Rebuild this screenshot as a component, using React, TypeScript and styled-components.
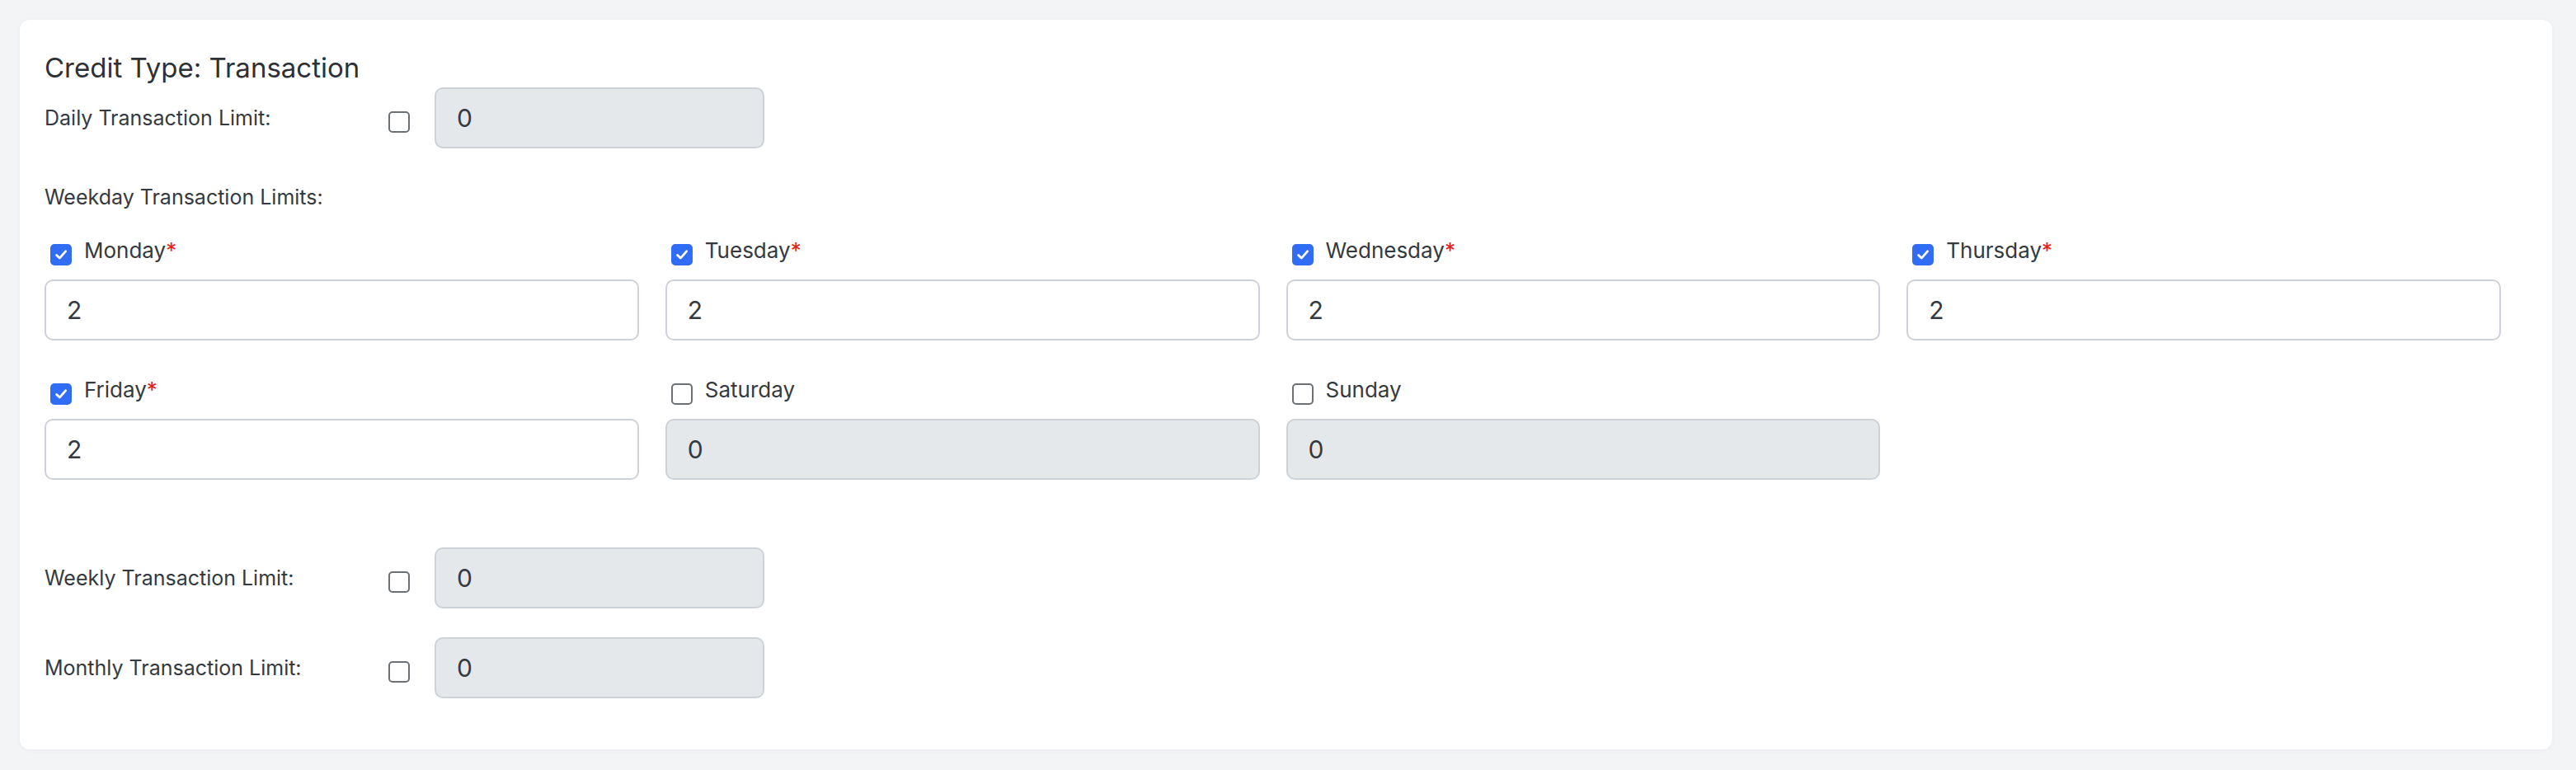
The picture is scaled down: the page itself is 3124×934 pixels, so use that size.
import styled, { createGlobalStyle } from "styled-components";

const GlobalStyle = createGlobalStyle`
  body {
    margin: 0;
    background: #f3f4f6;
    font-family: Inter, "Noto Sans", "Liberation Sans", sans-serif;
    color: #343a40;
  }
`;

type Day = { name: string; checked: boolean; value: string };

const days: Day[] = [
    { name: "Monday", checked: true, value: "2" },
    { name: "Tuesday", checked: true, value: "2" },
    { name: "Wednesday", checked: true, value: "2" },
    { name: "Thursday", checked: true, value: "2" },
    { name: "Friday", checked: true, value: "2" },
    { name: "Saturday", checked: false, value: "0" },
    { name: "Sunday", checked: false, value: "0" },
];

const CheckBox = ({ checked }: { checked: boolean }) => (
    <Box $checked={checked}>
        {checked && (
            <svg width="18" height="18" viewBox="0 0 18 18">
                <path d="M3.6 9.4 L7.3 13.1 L14.6 4.8" fill="none" stroke="#fff" strokeWidth="2.8" strokeLinecap="round" strokeLinejoin="round" />
            </svg>
        )}
    </Box>
);

const App = () => {
    return (
        <Page>
            <GlobalStyle />
            <Card>
                <Title>Credit Type: Transaction</Title>

                <LimitRow>
                    <RowLabel>Daily Transaction Limit:</RowLabel>
                    <RowCheck><CheckBox checked={false} /></RowCheck>
                    <LimitInput disabled value="0" readOnly />
                </LimitRow>

                <SectionLabel>Weekday Transaction Limits:</SectionLabel>

                <DayGrid>
                    {days.map((d) => (
                        <DayField key={d.name}>
                            <DayHead>
                                <CheckBox checked={d.checked} />
                                <DayName>
                                    {d.name}
                                    {d.checked && <Required>*</Required>}
                                </DayName>
                            </DayHead>
                            <DayInput disabled={!d.checked} value={d.value} readOnly />
                        </DayField>
                    ))}
                </DayGrid>

                <LimitRow $top={82}>
                    <RowLabel>Weekly Transaction Limit:</RowLabel>
                    <RowCheck><CheckBox checked={false} /></RowCheck>
                    <LimitInput disabled value="0" readOnly />
                </LimitRow>

                <LimitRow $top={35}>
                    <RowLabel>Monthly Transaction Limit:</RowLabel>
                    <RowCheck><CheckBox checked={false} /></RowCheck>
                    <LimitInput disabled value="0" readOnly />
                </LimitRow>
            </Card>
        </Page>
    );
};

const Page = styled.div`
  padding: 24px 29px 25px 24px;
`;

const Card = styled.div`
  background: #fff;
  border-radius: 12px;
  padding: 41px 30px 62px 30px;
  box-shadow: 0 1px 6px rgba(15, 23, 42, 0.04);
`;

const Title = styled.h2`
  margin: 0 0 7px;
  font-size: 33px;
  line-height: 34px;
  font-weight: 400;
  color: #2d3136;
`;

const LimitRow = styled.div<{ $top?: number }>`
  display: flex;
  align-items: center;
  margin-top: ${(p) => p.$top ?? 0}px;
`;

const RowLabel = styled.label`
  width: 417px;
  font-size: 25px;
  line-height: 36px;
`;

const RowCheck = styled.div`
  display: flex;
  margin-top: 10px;
  margin-right: 30px;
`;

const Box = styled.span<{ $checked: boolean }>`
  box-sizing: border-box;
  width: 26px;
  height: 26px;
  flex-shrink: 0;
  display: inline-flex;
  align-items: center;
  justify-content: center;
  border-radius: 5px;
  border: 2px solid ${(p) => (p.$checked ? "#316cf4" : "#6b7075")};
  background: ${(p) => (p.$checked ? "#316cf4" : "#fff")};
`;

const BaseInput = styled.input`
  box-sizing: border-box;
  height: 74px;
  padding: 0 25px;
  border: 2px solid #cdd2d8;
  border-radius: 10px;
  background: #fff;
  font-family: inherit;
  font-size: 30px;
  color: #343a40;
  outline: none;

  &:disabled {
    background: #e5e8eb;
    color: #343a40;
    -webkit-text-fill-color: #343a40;
    opacity: 1;
  }
`;

const LimitInput = styled(BaseInput)`
  width: 400px;
`;

const SectionLabel = styled.div`
  margin: 41px 0 29px;
  font-size: 25px;
  line-height: 36px;
`;

const DayGrid = styled.div`
  display: grid;
  grid-template-columns: repeat(4, 1fr);
  column-gap: 32px;
  row-gap: 42px;
  padding-right: 32px;
`;

const DayField = styled.div`
  display: flex;
  flex-direction: column;
`;

const DayHead = styled.div`
  display: flex;
  align-items: flex-start;
  gap: 15px;
  height: 36px;
  margin-bottom: 17px;
  padding-left: 7px;

  ${Box} {
    margin-top: 10px;
  }
`;

const DayName = styled.span`
  font-size: 26px;
  line-height: 36px;
`;

const Required = styled.span`
  color: #e0221b;
`;

const DayInput = styled(BaseInput)`
  width: 100%;
`;

export default App;
